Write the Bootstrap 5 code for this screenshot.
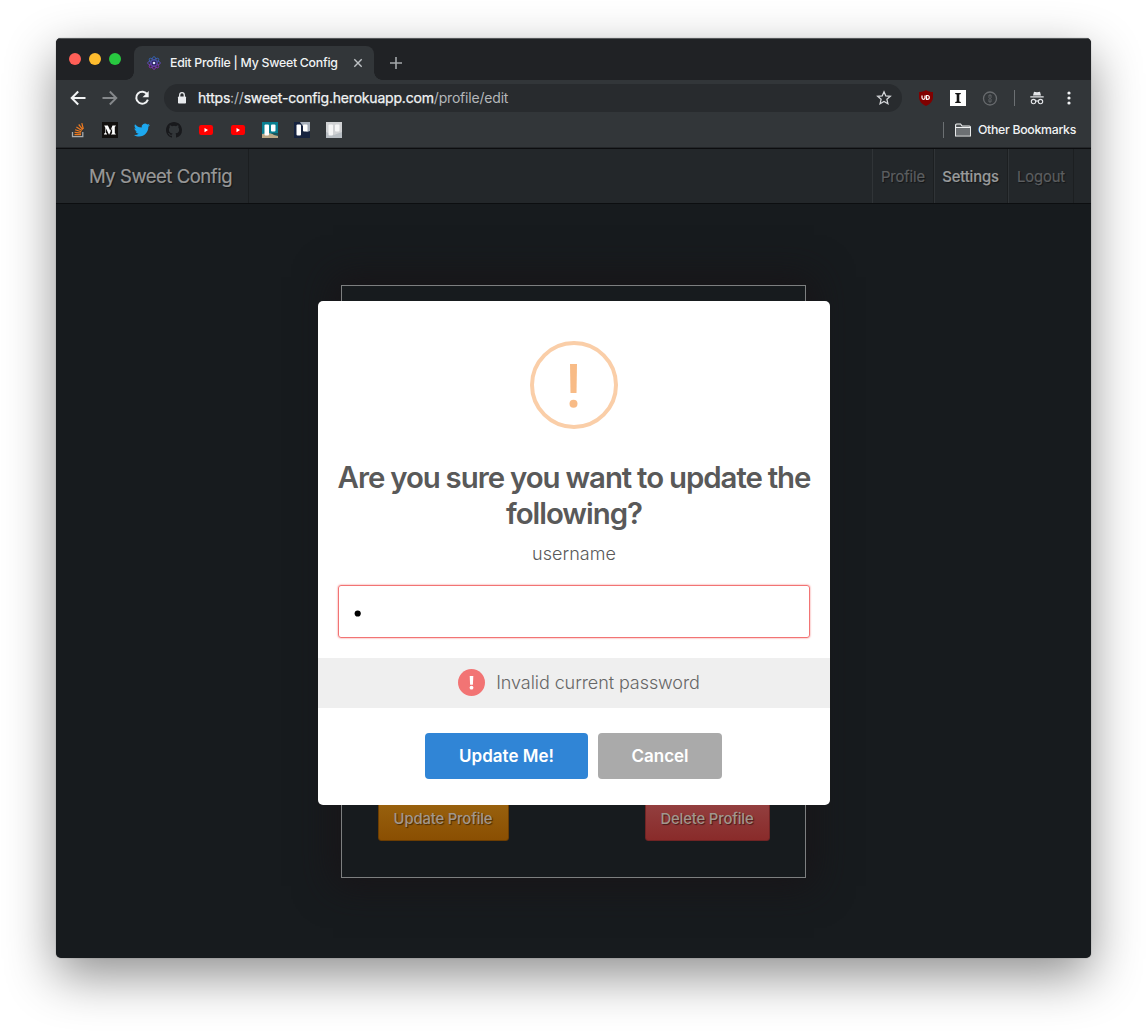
<!DOCTYPE html>
<html lang="en">
<head>
<meta charset="utf-8">
<title>Edit Profile | My Sweet Config</title>
<link href="https://cdn.jsdelivr.net/npm/bootstrap@5.3.0/dist/css/bootstrap.min.css" rel="stylesheet">
<style>
body{background:#fff;font-family:Inter,"Liberation Sans",sans-serif;height:1032px;overflow:hidden;padding:38px 56px 0}
svg{display:block;flex:none}
.win{width:1035px;height:920px;border-radius:5px;background:#171b1e;box-shadow:0 0 1px rgba(0,0,0,.55),0 18px 50px rgba(0,0,0,.44);overflow:hidden}
.tabstrip{height:42px;background:#202225;border-top:1px solid #55585a}
.lights{gap:8px;padding:14px 0 0 13px;width:78px}
.lights span{width:12px;height:12px;border-radius:50%}
.tab-item{width:240px;height:34px;margin-top:7px;background:#323639;border-radius:8px 8px 0 0;color:#f1f3f4;padding:0 11px 0 13px;font-size:12.3px;font-weight:500}
.tab-item::before,.tab-item::after{content:"";position:absolute;bottom:0;width:8px;height:8px}
.tab-item::before{left:-8px;background:radial-gradient(circle at 0 0,transparent 7.5px,#323639 8px)}
.tab-item::after{right:-8px;background:radial-gradient(circle at 100% 0,transparent 7.5px,#323639 8px)}
.tab-name{margin-left:9px;width:180px;letter-spacing:-.25px;white-space:nowrap}
.chrome-ui{background:#323639;height:68px;border-bottom:1px solid #232629}
.tools{height:36px;padding-left:13px}
.omni{width:738px;height:28px;border-radius:14px;background:#282b2e;margin-left:13px;padding:0 10px 0 11px;font-size:14px;color:#b4b7ba}
.url-txt{margin-left:9px;letter-spacing:-.19px;white-space:nowrap;padding-bottom:2px}
.url-txt b{color:#f1f3f4;font-weight:400;-webkit-text-stroke:.25px #f1f3f4}
.bmarks{height:28px;padding:0 15px 0 14px;gap:16px;color:#f1f3f4}
.bmarks .other{font-size:12.3px;font-weight:500;letter-spacing:-.29px;margin-left:-9px;white-space:nowrap}
.vline{width:1px;height:16px;background:#6c7073}
.site-nav{height:56px;background:#23272a;border-top:1px solid #0c0d0f;border-bottom:1px solid #0c0e10;text-shadow:1px 1px 1px rgba(0,0,0,.5)}
.site-brand{font-size:18.5px;color:#989898;width:193px;padding:2px 0 0 33px;border-right:1px solid #1b1e20;letter-spacing:-.47px;white-space:nowrap;-webkit-text-stroke:.2px #989898}
.site-link{font-size:14.8px;color:#5c5e60;border-left:1px solid #303437;border-right:1px solid #1c1f21;padding:2px 0 0;letter-spacing:-.1px;-webkit-text-stroke:.2px #5c5e60}
.site-link.on{color:#989a9b;font-weight:500;letter-spacing:-.15px;padding-right:1px;-webkit-text-stroke:.2px #989a9b}
.stage{height:754px;padding-top:81px}
.profile-box{width:465px;height:593px;margin-left:285px;border:1px solid #7d7f80;padding:0 35.500px 36px 35.500px;box-shadow:0 0 35px 8px rgba(24,20,23,.9)}
.old-btn{height:45px;border-radius:3px;color:#a1978d;font-size:14.8px;font-weight:500;text-shadow:1px 1px 1px rgba(0,0,0,.5);padding:1px 0 0;letter-spacing:-.15px}
.old-upd{width:131px;background:linear-gradient(#9b6410,#8a4f02);border:1px solid #6c3d02}
.old-del{width:125px;background:linear-gradient(#954343,#892b2a);border:1px solid #702424}
.dialog-box{position:absolute;left:262px;top:263px;width:512px;height:504px;background:#fff;border-radius:5px;padding-top:40px;color:#595959}
.ask{font-size:29.4px;line-height:36px;font-weight:600;margin:31px 0 0;letter-spacing:-1.02px;word-spacing:-.5px;white-space:nowrap}
.what{font-size:18px;line-height:24px;font-weight:300;margin-top:10px;letter-spacing:.02px}
.pass{width:472px;height:53px;border:1px solid #f27474;border-radius:3px;margin-top:19px;box-shadow:0 0 2px #f27474;padding:2px 15px 0;font-size:18px;color:#000}
.invalid-row{height:50px;background:#efefef;margin-top:20px;font-size:18px;font-weight:300;gap:11px;color:#666;width:100%;padding:0 0 2px 10px;letter-spacing:-.08px}
.bang{width:27px;height:27px;border-radius:50%;background:#f27474}
.acts{margin:25px 1px 0 0;gap:10px}
.acts .btn{height:46px;border:0;border-radius:4px;color:#fff;font-weight:600;font-size:17px;padding:2px 0 0}
.go{width:163px;background:#3085d6!important}
.no{width:124px;background:#aaa!important}
</style>
<script src="https://cdn.jsdelivr.net/npm/bootstrap@5.3.0/dist/js/bootstrap.bundle.min.js"></script>
</head>
<body>
<div class="win position-relative">
  <div class="tabstrip d-flex">
    <div class="lights d-flex"><span style="background:#ff5f57"></span><span style="background:#febc2e"></span><span style="background:#28c840"></span></div>
    <div class="tab-item d-flex align-items-center position-relative">
      <svg width="14" height="14" viewBox="0 0 14 14" fill="none" stroke-width=".8"><defs><linearGradient id="at" x1="0" y1="0" x2="0" y2="14" gradientUnits="userSpaceOnUse"><stop stop-color="#2a6fc4"/><stop offset="1" stop-color="#9a28c0"/></linearGradient></defs><g stroke="url(#at)"><ellipse cx="7" cy="7" rx="6.500" ry="2.300"/><ellipse cx="7" cy="7" rx="2.300" ry="6.500"/><ellipse cx="7" cy="7" rx="2.300" ry="6.300" transform="rotate(45 7 7)"/><ellipse cx="7" cy="7" rx="2.300" ry="6.300" transform="rotate(-45 7 7)"/></g><circle cx="7" cy="7" r="2.500" fill="#27205b"/><circle cx="7" cy="7" r="1.300" fill="#dfe8ff"/></svg>
      <span class="tab-name">Edit Profile | My Sweet Config</span>
      <svg class="ms-auto" width="10" height="10" viewBox="0 0 10 10" stroke="#bdc1c4" stroke-width="1.400"><path d="M1.300 1.300l7.400 7.400M8.700 1.300L1.300 8.700"/></svg>
    </div>
    <svg style="margin:18px 0 0 16px" width="12" height="12" viewBox="0 0 12 12" stroke="#a4a8ab" stroke-width="1.600"><path d="M6 0v12M0 6h12"/></svg>
  </div>
  <div class="chrome-ui">
    <div class="tools d-flex align-items-center">
      <svg width="18" height="16" viewBox="0 0 18 16" fill="none" stroke="#f1f3f4" stroke-width="2"><path d="M16.500 8H3M9.200 1.500L2.700 8l6.500 6.500"/></svg>
      <svg style="margin-left:14px" width="18" height="16" viewBox="0 0 18 16" fill="none" stroke="#85888b" stroke-width="1.900"><path d="M1.500 8H15M8.800 1.500L15.300 8l-6.500 6.500"/></svg>
      <svg style="margin-left:14px" width="18" height="16" viewBox="0 0 18 16" fill="none" stroke="#f1f3f4" stroke-width="2"><path d="M14.300 4.400A6 6 0 1 0 14.900 9.700"/><path d="M15.700 1v6.200H9.500z" fill="#f1f3f4" stroke="none"/></svg>
      <div class="omni d-flex align-items-center">
        <svg width="14" height="14" viewBox="0 0 14 14"><rect x="3" y="5.500" width="8" height="7" rx=".8" fill="#e8eaed"/><path d="M4.700 6V4a2.300 2.300 0 0 1 4.600 0v2" fill="none" stroke="#e8eaed" stroke-width="1.300"/></svg>
        <span class="url-txt"><b>https</b>://<b>sweet-config.herokuapp.com</b>/profile/edit</span>
        <svg class="ms-auto" width="16" height="16" viewBox="0 0 16 16" fill="none" stroke="#d5d7da" stroke-width="1.300"><path d="M8 1.800l1.800 4.100 4.500.4-3.400 3 1 4.400L8 11.400l-3.900 2.300 1-4.400-3.400-3 4.500-.4z"/></svg>
      </div>
      <svg style="margin-left:16px" width="16" height="16" viewBox="0 0 16 16"><path d="M8 0c2 1.400 4.500 2 7 2v5c0 4.500-3 7-7 9-4-2-7-4.500-7-9V2c2.500 0 5-.6 7-2z" fill="#800000"/><path d="M4 5.500v2.300a1.500 1.500 0 0 0 3 0V5.500M8.500 5.500v3.800h.9a1.900 1.900 0 0 0 0-3.800z" fill="none" stroke="#fff" stroke-width="1.200"/></svg>
      <svg style="margin-left:16px" width="16" height="16" viewBox="0 0 16 16"><path fill="#fff" d="M0 0h16v16H0z"/><path fill="#151515" d="M5.200 3h5.600v.9l-1.500.5v7.200l1.500.5v.9H5.200v-.9l1.500-.5V4.400l-1.500-.5z"/></svg>
      <svg style="margin-left:16px" width="16" height="16" viewBox="0 0 16 16" fill="none" stroke="#686b6e" stroke-width="1.300"><circle cx="8" cy="8.500" r="6.500"/><path d="M7 5h2v2.800l-.6.700.6.800V12H7V9.200l.6-.7-.6-.8z" stroke-width=".9"/></svg>
      <span class="vline" style="margin-left:16px"></span>
      <svg style="margin-left:15px" width="14" height="14" viewBox="0 0 14 14" fill="#e3e5e8"><path d="M4 .8l3 .5L10 .8l1 3.700H3zM.3 5.300h13.400v1.200H.3z"/><g fill="none" stroke="#e3e5e8" stroke-width="1.100"><circle cx="3.500" cy="10.600" r="2.200"/><circle cx="10.500" cy="10.600" r="2.200"/><path d="M5.700 10.200q1.300-.6 2.600 0"/></g></svg>
      <svg style="margin-left:23px" width="4" height="14" viewBox="0 0 4 14" fill="#f1f3f4"><circle cx="2" cy="2" r="1.600"/><circle cx="2" cy="7" r="1.600"/><circle cx="2" cy="12" r="1.600"/></svg>
    </div>
    <div class="bmarks d-flex align-items-center">
      <svg width="16" height="16" viewBox="0 0 16 16" fill="none"><path d="M2.500 10v4.700h10.300V10" stroke="#a7abae" stroke-width="1.300"/><path d="M4.500 12.600h6.500M4.600 10.300l6.500.9M5.100 7.700l6.200 2M6.400 4.900l5.500 3.600M8.700 2.500l4.100 5.100M11.800 1.200l1.500 5.800" stroke="#ee7a1f" stroke-width="1.200"/></svg>
      <svg width="16" height="16" viewBox="0 0 16 16"><path d="M0 0h16v16H0z" fill="#12100e"/><path fill="#fff" d="M2.300 3.500h3.600l2.400 5.300 2.200-5.300h3.300v.5l-1 .8v6.500l1 .8v.5H9.100v-.5l1-.8V5.900l-2.800 6.700h-.4L3.800 5.900v4.500l1.200 1.700v.5H2v-.5l1.200-1.700V4.900L2.300 4z"/></svg>
      <svg width="16" height="16" viewBox="0 0 16 16"><path fill="#1da8ef" d="M5 14.500c6 0 9.300-5 9.300-9.300V4.800c.6-.5 1.200-1 1.600-1.700-.6.300-1.200.4-1.900.5.700-.4 1.200-1 1.400-1.800-.6.400-1.300.6-2.100.8A3.300 3.300 0 0 0 7.700 5.600C5 5.500 2.600 4.200 1 2.200c-.9 1.500-.4 3.400 1 4.400-.5 0-1-.2-1.500-.4 0 1.600 1.100 2.900 2.600 3.200-.5.100-1 .2-1.500.1.400 1.300 1.600 2.200 3.100 2.300C3.300 12.800 1.700 13.200 0 13c1.500 1 3.200 1.500 5 1.500"/></svg>
      <svg width="16" height="16" viewBox="0 0 16 16"><path fill="#18191c" d="M8 0C3.580 0 0 3.580 0 8c0 3.540 2.290 6.530 5.470 7.590.4.070.55-.17.55-.38 0-.19-.01-.82-.01-1.490-2.010.37-2.530-.49-2.690-.94-.09-.23-.48-.94-.82-1.130-.28-.15-.68-.52-.01-.53.63-.01 1.080.58 1.230.82.720 1.210 1.870.87 2.330.66.070-.52.280-.87.510-1.070-1.780-.2-3.640-.89-3.640-3.950 0-.87.310-1.590.82-2.150-.08-.2-.36-1.020.08-2.120 0 0 .67-.21 2.200.82a7.600 7.600 0 0 1 4 0c1.530-1.040 2.200-.82 2.200-.82.440 1.100.16 1.920.08 2.120.51.560.82 1.270.82 2.150 0 3.070-1.870 3.750-3.650 3.950.29.250.54.730.54 1.480 0 1.070-.01 1.930-.01 2.200 0 .21.150.46.550.38A8 8 0 0 0 16 8c0-4.420-3.580-8-8-8"/></svg>
      <svg width="16" height="16" viewBox="0 0 16 16"><rect x="1" y="3" width="14" height="10" rx="2.200" fill="#f00"/><path d="M6.500 6v4.200L10 8.100z" fill="#fff"/></svg>
      <svg width="16" height="16" viewBox="0 0 16 16"><rect x="1" y="3" width="14" height="10" rx="2.200" fill="#f00"/><path d="M6.500 6v4.200L10 8.100z" fill="#fff"/></svg>
      <svg width="16" height="16" viewBox="0 0 16 16"><path fill="#087f91" d="M0 0h16v16H0z"/><path fill="#bba887" d="M0 12l6-1 10 2v3H0z"/><path fill="#18555c" d="M9 11h7v3l-4-1z"/><rect x="2.500" y="2.500" width="4.500" height="11" rx="1" fill="#fff"/><rect x="9" y="2.500" width="4.500" height="7" rx="1" fill="#fff"/></svg>
      <svg width="16" height="16" viewBox="0 0 16 16"><path fill="#16233f" d="M0 0h16v16H0z"/><path fill="#a5adb8" d="M6 0h10v9l-3 1z"/><rect x="2.500" y="2.500" width="4.500" height="11" rx="1" fill="#fff"/><rect x="9" y="2.500" width="4.500" height="7" rx="1" fill="#fff"/></svg>
      <svg width="16" height="16" viewBox="0 0 16 16"><path fill="#cfd1d3" d="M0 0h16v16H0z"/><path fill="#b7bdc2" d="M0 10l8 3 8-3v6H0z"/><rect x="2.500" y="2.500" width="4.500" height="11" rx="1" fill="#f4f5f5"/><rect x="9" y="2.500" width="4.500" height="7" rx="1" fill="#f4f5f5"/></svg>
      <span class="vline ms-auto"></span>
      <svg style="margin-left:-5px" width="16" height="14" viewBox="0 0 16 14"><path d="M.6 12.900V2q0-1 1-1h4l1.500 2h7.300q1 0 1 1v8.900z" fill="#4c5053" stroke="#f1f3f4" stroke-width="1.100"/><path d="M1 5h14v7.500H1z" fill="#6c7073"/><path d="M.6 4.500h14.800" stroke="#f1f3f4"/></svg>
      <span class="other">Other Bookmarks</span>
    </div>
  </div>
  <nav class="site-nav d-flex">
    <div class="site-brand d-flex align-items-center">My Sweet Config</div>
    <div class="site-link ms-auto d-flex align-items-center justify-content-center" style="width:62px">Profile</div>
    <div class="site-link on d-flex align-items-center justify-content-center" style="width:74px">Settings</div>
    <div class="site-link d-flex align-items-center justify-content-center" style="width:66px;margin-right:17px">Logout</div>
  </nav>
  <main class="stage">
    <div class="profile-box d-flex justify-content-between align-items-end">
      <button class="btn old-btn old-upd">Update Profile</button>
      <button class="btn old-btn old-del">Delete Profile</button>
    </div>
  </main>
  <div class="dialog-box d-flex flex-column align-items-center text-center">
    <svg width="88" height="88" viewBox="0 0 88 88"><circle cx="44" cy="44" r="42" fill="none" stroke="#facea8" stroke-width="4"/><path d="M40 23h7l-.5 29h-6z" fill="#f8bb86"/><circle cx="43.500" cy="62.700" r="4" fill="#f8bb86"/></svg>
    <h2 class="ask">Are you sure you want to update the<br>following?</h2>
    <div class="what">username</div>
    <div class="pass d-flex align-items-center"><svg width="8" height="8" viewBox="0 0 8 8"><circle cx="3.700" cy="4.500" r="3.100"/></svg></div>
    <div class="invalid-row d-flex align-items-center justify-content-center">
      <span class="bang d-flex align-items-center justify-content-center"><svg width="5" height="15" viewBox="0 0 5 15" fill="#fff"><path d="M.7 1h3.600l-.4 8.700H1.100z"/><circle cx="2.500" cy="12.700" r="1.900"/></svg></span>
      <span>Invalid current password</span>
    </div>
    <div class="acts d-flex">
      <button class="btn go">Update Me!</button>
      <button class="btn no">Cancel</button>
    </div>
  </div>
</div>
</body>
</html>
